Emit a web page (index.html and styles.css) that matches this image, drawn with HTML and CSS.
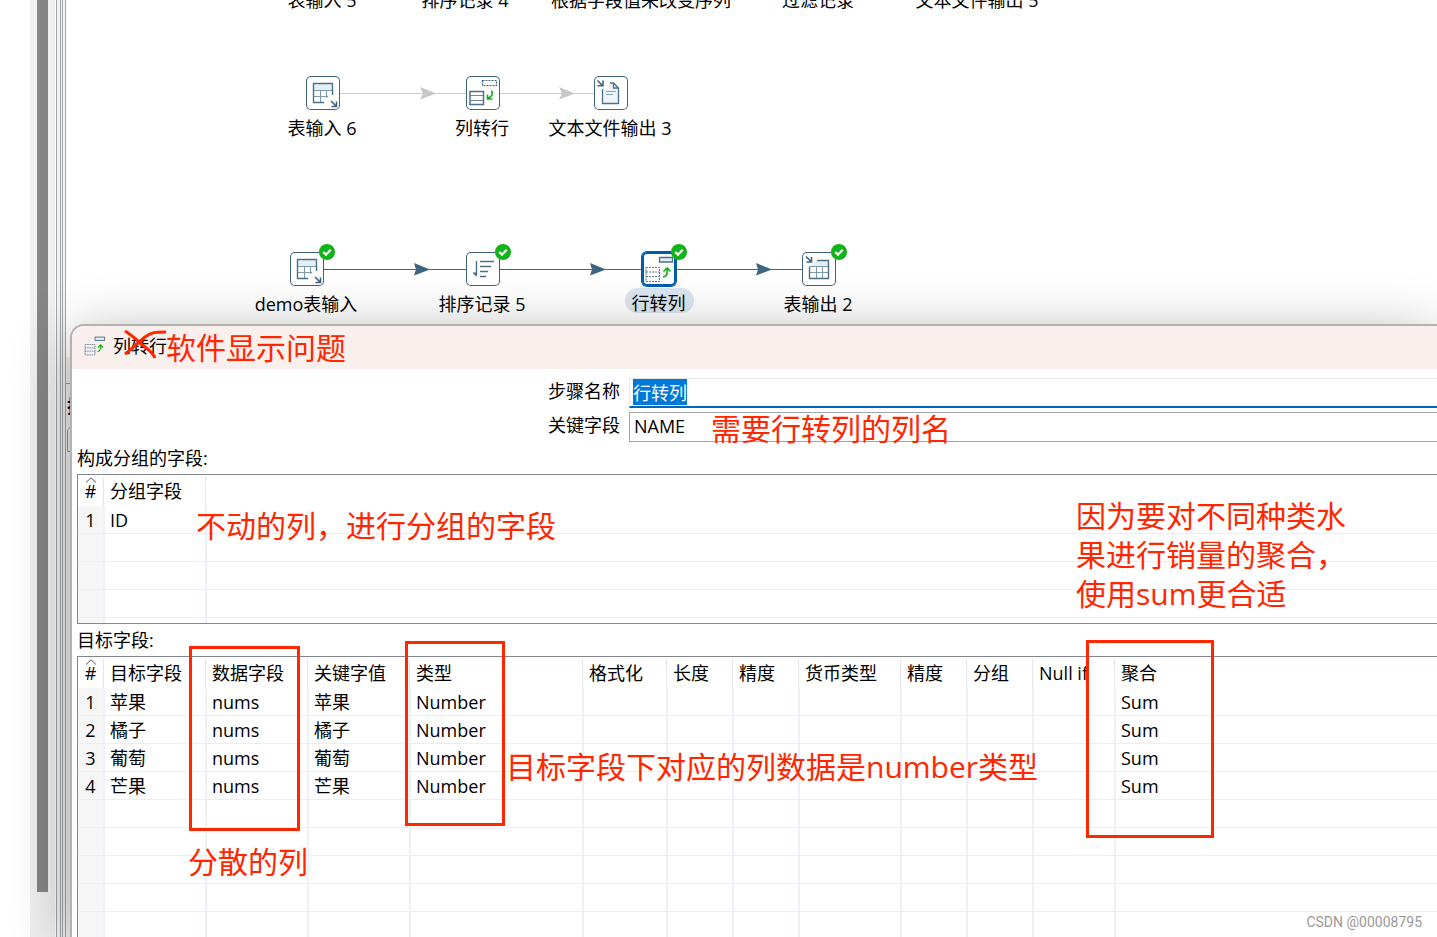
FILE: index.html
```html
<!DOCTYPE html>
<html lang="zh-CN">
<head>
<meta charset="utf-8">
<title>列转行</title>
<link rel="stylesheet" href="styles.css">
</head>
<body>
<svg class="defs" aria-hidden="true">
  <symbol id="table-in" viewBox="0 0 34 34">
    <path d="M8 8h18v6H8z" fill="#e4eef5"/>
    <path d="M8 14.500h18M8 20.500h14M14.500 14v12M20.500 14v8" fill="none" stroke="#7d9aae"/>
    <path d="M26.500 19V7.500h-19v19H18" fill="none" stroke="#4d7088" stroke-width="1.400"/>
    <path d="M25 25l5 5M30.500 25.500v5h-5" fill="none" stroke="#3d6480" stroke-width="1.600"/>
  </symbol>
  <symbol id="table-out" viewBox="0 0 34 34">
    <path d="M8 14h18v-5H15z" fill="#e4eef5"/>
    <path d="M8 14.500h18M14.500 14v12M20.500 14v12M8 20.500h18" fill="none" stroke="#7d9aae"/>
    <path d="M15 8.500h11.500v18h-19v-12" fill="none" stroke="#4d7088" stroke-width="1.400"/>
    <path d="M4 4.500l5 5M9.500 5v5h-5" fill="none" stroke="#3d6480" stroke-width="1.600"/>
  </symbol>
  <symbol id="file-out" viewBox="0 0 34 34">
    <path d="M9 13v14h15V12l-4-4h-5v5z" fill="#edf5fa"/>
    <path d="M8.500 13v14.500h16V12l-5-5H16M19.500 7v5h5" fill="none" stroke="#4d7088" stroke-width="1.300"/>
    <path d="M12 15.500h10M12 18.500h7" stroke="#8ba4b5" fill="none"/>
    <path d="M3.500 4.500l5 5M9 4.500v5.300H3.500" fill="none" stroke="#3d6480" stroke-width="1.600"/>
  </symbol>
  <symbol id="split" viewBox="0 0 34 34">
    <path d="M16.500 4.500h14v5h-14z" fill="none" stroke="#3d6480" stroke-width="1.200" stroke-dasharray="2 1"/>
    <path d="M4 15.500h13.500V28.500H4z" fill="none" stroke="#4d7088" stroke-width="1.500"/>
    <path d="M4 19.500h13M4 24.500h13" fill="none" stroke="#6d8ba0"/>
    <path d="M25.500 14.500c2 4 0 6.500-4 8M21.500 18.500v4.500h5" fill="none" stroke="#12b31a" stroke-width="1.700"/>
  </symbol>
  <symbol id="merge" viewBox="0 0 34 34">
    <path d="M17.500 5.500h13v4.500h-13z" fill="#e4eef5" stroke="#4d7088" stroke-width="1.300"/>
    <path d="M4 15.500h13.500V29.500H4zM4 20h13.500M4 24.500h13.500" fill="none" stroke="#5d7e95" stroke-width="1.200" stroke-dasharray="2 1"/>
    <path d="M21 25c4-.500 4.500-3 4-8M21.500 19.500l3.700-3.500 3.300 3.500" fill="none" stroke="#12b31a" stroke-width="1.700"/>
  </symbol>
  <symbol id="sort" viewBox="0 0 34 34">
    <path d="M10.500 9v14M14 9.500h14M14 14.500h11M14 19.500h8M14 24.500h6" fill="none" stroke="#4d7088" stroke-width="1.400"/>
    <path d="M6.500 20.500h4v4.500z" fill="#3d6480"/>
  </symbol>
  <symbol id="ok" viewBox="0 0 16 16">
    <circle cx="8" cy="8" r="8" fill="#12b31a"/>
    <path d="M4.300 8l2.700 2.700 4.700-5" fill="none" stroke="#fff" stroke-width="2.200"/>
  </symbol>
</svg>

<div class="app">
  <div class="gutter"></div>
  <div class="scroll"><div class="thumb"></div></div>
  <div class="sash"><i></i><i></i></div>
  <div class="work">
    <main class="canvas"></main>
    <div class="canvas-foot"></div>
    <section class="results">
      <h2>执行结果</h2>
      <div class="results-tab"></div>
    </section>
  </div>

  <svg class="hops" width="900" height="320" aria-hidden="true">
    <g stroke="#cfcfcf" fill="#c8c8c8"><path d="M340 93.500H466M500 93.500H594"/><path stroke="none" d="M420 87l16 6.500-16 6 3-6zM559 87l16 6.500-16 6 3-6z"/></g>
    <g stroke="#3d6480" fill="#3d6480"><path d="M324 269.500H466M500 269.500H641M677 269.500H802"/><path stroke="none" d="M414 263l16 6.500-16 6 2-6zM590 263l16 6.500-16 6 2-6zM756 263l16 6.500-16 6 2-6z"/></g>
  </svg>

  <div class="node cut n1"><span>表输入 5</span></div>
  <div class="node cut n2"><span>排序记录 4</span></div>
  <div class="node cut n3"><span>根据字段值来改变序列</span></div>
  <div class="node cut n4"><span>过滤记录</span></div>
  <div class="node cut n5"><span>文本文件输出 5</span></div>

  <div class="node mid n1"><svg class="icon"><use href="#table-in"/></svg><span>表输入 6</span></div>
  <div class="node mid n6"><svg class="icon"><use href="#split"/></svg><span>列转行</span></div>
  <div class="node mid n7"><svg class="icon"><use href="#file-out"/></svg><span>文本文件输出 3</span></div>

  <div class="node low n8"><svg class="icon"><use href="#table-in"/></svg><svg class="ok"><use href="#ok"/></svg><span>demo表输入</span></div>
  <div class="node low n6"><svg class="icon"><use href="#sort"/></svg><svg class="ok"><use href="#ok"/></svg><span>排序记录 5</span></div>
  <div class="node low n9 selected"><svg class="icon"><use href="#merge"/></svg><svg class="ok"><use href="#ok"/></svg><span>行转列</span></div>
  <div class="node low n10"><svg class="icon"><use href="#table-out"/></svg><svg class="ok"><use href="#ok"/></svg><span>表输出 2</span></div>

  <section class="dialog">
    <header class="title"><svg class="title-icon" viewBox="3 4 29 27"><use href="#merge" width="34" height="34"/></svg><h1>列转行</h1></header>
    <form class="form">
      <label for="step">步骤名称</label><input id="step" class="step" value="行转列" autofocus>
      <label for="key">关键字段</label><input id="key" class="key" value="NAME">
    </form>
    <h3>构成分组的字段:</h3>
    <div class="grid group">
      <table>
        <colgroup><col class="w27"><col class="w102"><col></colgroup>
        <thead><tr><th><svg class="caret" viewBox="0 0 12 6"><path d="M1 5.500L6 .8l5 4.700"/></svg>#</th><th>分组字段</th><th></th></tr></thead>
        <tbody>
          <tr><td>1</td><td>ID</td><td></td></tr>
          <tr><td></td><td></td><td></td></tr>
          <tr><td></td><td></td><td></td></tr>
          <tr><td></td><td></td><td></td></tr>
          <tr><td></td><td></td><td></td></tr>
        </tbody>
      </table>
    </div>
    <h3>目标字段:</h3>
    <div class="grid target">
      <table>
        <colgroup><col class="w27"><col class="w102"><col class="w102"><col class="w102"><col class="w173"><col class="w84"><col class="w66"><col class="w66"><col class="w102"><col class="w66"><col class="w66"><col class="w82"><col></colgroup>
        <thead><tr><th><svg class="caret" viewBox="0 0 12 6"><path d="M1 5.500L6 .8l5 4.700"/></svg>#</th><th>目标字段</th><th>数据字段</th><th>关键字值</th><th>类型</th><th>格式化</th><th>长度</th><th>精度</th><th>货币类型</th><th>精度</th><th>分组</th><th>Null if</th><th>聚合</th></tr></thead>
        <tbody>
          <tr><td>1</td><td>苹果</td><td>nums</td><td>苹果</td><td>Number</td><td></td><td></td><td></td><td></td><td></td><td></td><td></td><td>Sum</td></tr>
          <tr><td>2</td><td>橘子</td><td>nums</td><td>橘子</td><td>Number</td><td></td><td></td><td></td><td></td><td></td><td></td><td></td><td>Sum</td></tr>
          <tr><td>3</td><td>葡萄</td><td>nums</td><td>葡萄</td><td>Number</td><td></td><td></td><td></td><td></td><td></td><td></td><td></td><td>Sum</td></tr>
          <tr><td>4</td><td>芒果</td><td>nums</td><td>芒果</td><td>Number</td><td></td><td></td><td></td><td></td><td></td><td></td><td></td><td>Sum</td></tr>
          <tr><td></td><td></td><td></td><td></td><td></td><td></td><td></td><td></td><td></td><td></td><td></td><td></td><td></td></tr>
          <tr><td></td><td></td><td></td><td></td><td></td><td></td><td></td><td></td><td></td><td></td><td></td><td></td><td></td></tr>
          <tr><td></td><td></td><td></td><td></td><td></td><td></td><td></td><td></td><td></td><td></td><td></td><td></td><td></td></tr>
          <tr><td></td><td></td><td></td><td></td><td></td><td></td><td></td><td></td><td></td><td></td><td></td><td></td><td></td></tr>
          <tr><td></td><td></td><td></td><td></td><td></td><td></td><td></td><td></td><td></td><td></td><td></td><td></td><td></td></tr>
        </tbody>
      </table>
    </div>
  </section>

  <svg class="cross" viewBox="0 0 46 34" aria-hidden="true"><path d="M2 3C10 8 16 14 22 19c4 3 8 6 10 11M2 26C9 21 16 14 22 9c7-5 10-5 21-5"/></svg>
  <div class="box b1"></div>
  <div class="box b2"></div>
  <div class="box b3"></div>
  <p class="note a1">软件显示问题</p>
  <p class="note a2">需要行转列的列名</p>
  <p class="note a3">不动的列，进行分组的字段</p>
  <p class="note a4">因为要对不同种类水<br>果进行销量的聚合，<br>使用sum更合适</p>
  <p class="note a5">目标字段下对应的列数据是number类型</p>
  <p class="note a6">分散的列</p>
  <p class="mark">CSDN @00008795</p>
</div>
<script src="main.js"></script>
</body>
</html>
```
FILE: main.js
```js
const step = document.getElementById('step');
step.focus();
step.select();
```
FILE: styles.css
```css
* { box-sizing: border-box; }
body {
  margin: 0;
  color: #000;
  background: #fff;
  font: 18px/24px "Open Sans", "Noto Sans CJK SC", sans-serif;
}
h1, h2, h3, p { margin: 0; font-size: inherit; font-weight: inherit; }
.defs { position: absolute; width: 0; height: 0; }
.app { position: relative; display: flex; min-height: 100vh; overflow: hidden; }

.gutter { width: 30px; }
.scroll { width: 25px; padding: 0 7px 45px; background: #f0f0f0; display: flex; }
.thumb { flex: 1; background: #868686; }
.sash { width: 10px; margin-left: 1px; display: flex; justify-content: space-between; background: #f3f3f3; border: solid #a2a5a9; border-width: 0 1px; padding: 0 2px 0 3px; }
.sash i { width: 1px; background: #a2a5a9; }
.work { flex: 1; display: flex; flex-direction: column; background: #f0f0f0; }
.canvas { height: 357px; background: #fff; }
.canvas-foot { height: 27px; background: #eee; border-bottom: 1px solid #999; }
.results h2 { padding: 10px 1px 8px; font-weight: 700; }
.results-tab { margin-left: 1px; height: 26px; border: 1px solid #999; border-radius: 6px 0 0 0; }

.hops { position: absolute; left: 0; top: 0; }
.node { position: absolute; width: 200px; display: flex; flex-direction: column; align-items: center; gap: 6px; }
.cut { top: -12px; }
.mid { top: 76px; }
.low { top: 252px; }
.n1 { left: 223px; }
.n2 { left: 366px; }
.n3 { left: 542px; }
.n4 { left: 719px; }
.n5 { left: 878px; }
.n6 { left: 383px; }
.n7 { left: 511px; }
.n8 { left: 207px; }
.n9 { left: 559px; }
.n10 { left: 719px; }
.node span { padding-right: 2px; }
.icon { width: 34px; height: 34px; background: #fff; border-radius: 5px; box-shadow: inset 0 0 0 1px #3d6480; }
.ok { position: absolute; left: 112px; top: -8px; width: 16px; height: 16px; }
.selected { gap: 2px; }
.selected .icon { box-shadow: inset 0 0 0 2px #005da6, 0 0 0 1px #005da6; }
.selected span { padding: 3px 8px 0 7px; height: 25px; border-radius: 13px; background: #dce6f0; }

.dialog {
  position: absolute; left: 70px; right: 0; top: 324px; bottom: 0;
  display: flex; flex-direction: column;
  background: #fff; border: solid #b2b2b2; border-width: 2px 0 0 2px;
  border-radius: 14px 0 0 0; overflow: hidden;
  box-shadow: 0 12px 60px rgba(0, 0, 0, .32);
}
.title { display: flex; align-items: center; gap: 7px; height: 43px; padding: 0 12px 3px; background: #f9f0ee; }
.title-icon { width: 22px; height: 20px; }
.form { display: grid; grid-template-columns: 549px 1fr; column-gap: 8px; row-gap: 4px; padding-top: 9px; }
.form label { text-align: right; line-height: 26px; padding-right: 1px; }
.form input { height: 30px; min-width: 0; border: 1px solid #a6a6a6; border-right: 0; border-radius: 0; outline: 0; padding: 0 4px 2px; font: inherit; color: #000; background: #fff; }
.form .step { padding: 0 3px 1px; border-color: #e6e6e6; border-bottom: 2px solid #0067c0; }
.form .step::selection { background: #0078d7; color: #fff; }
h3 { padding: 4px 5px; }
.grid { margin-left: 5px; border: solid #828790; border-width: 1px 0 1px 1px; overflow: hidden; }
.group { height: 150px; }
.target { flex: 1; border-bottom: 0; }
table { width: 100%; table-layout: fixed; border-collapse: separate; border-spacing: 0; }
th, td { height: 28px; padding: 0 0 0 5px; text-align: left; font-weight: 400; white-space: nowrap; line-height: 24px; }
th { position: relative; height: 31px; border-right: 2px solid #fff; background: linear-gradient(#e5e5e5, #e5e5e5) right 2px / 1px 100% no-repeat; }
th { border-right: 0; background-position: right 1px top 2px; }
td { border-right: 2px solid #edf2f9; border-bottom: 1px solid #eee; }
th:last-child { background: none; }
td:last-child { border-right: 0; }
th:first-child, td:first-child { padding: 0; text-align: center; }
th:first-child { padding-right: 2px; }
td:first-child { background: #f6f6f6; }
.caret { position: absolute; left: 7px; top: 2px; width: 12px; height: 6px; fill: none; stroke: #555; }
.w27 { width: 27px; }
.w66 { width: 66px; }
.w82 { width: 82px; }
.w84 { width: 84px; }
.w102 { width: 102px; }
.w173 { width: 173px; }

.cross { position: absolute; left: 123px; top: 328px; width: 46px; height: 34px; fill: none; stroke: #ff2600; stroke-width: 3; }
.box { position: absolute; border: 3px solid #ff2600; }
.b1 { left: 189px; top: 646px; width: 111px; height: 185px; }
.b2 { left: 405px; top: 641px; width: 100px; height: 185px; }
.b3 { left: 1086px; top: 640px; width: 128px; height: 198px; }
.note { position: absolute; color: #ff2600; font-size: 30px; line-height: 39px; white-space: nowrap; }
.a1 { left: 166px; top: 328px; }
.a2 { left: 711px; top: 409px; }
.a3 { left: 196px; top: 506px; }
.a4 { left: 1076px; top: 496px; }
.a5 { left: 506px; top: 747px; }
.a6 { left: 188px; top: 842px; }
.mark { position: absolute; right: 15px; bottom: 3px; color: #999; font: 14px/24px Roboto, sans-serif; }
```
